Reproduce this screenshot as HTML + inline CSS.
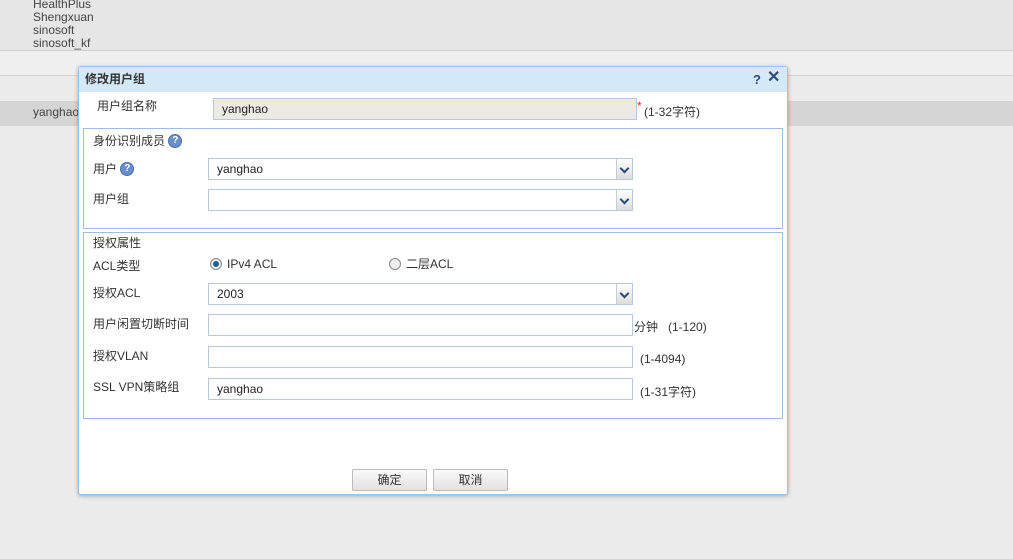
<!DOCTYPE html>
<html><head><meta charset="utf-8"><style>
*{margin:0;padding:0;box-sizing:border-box}
body{width:1013px;height:559px;background:#ebebeb;position:relative;overflow:hidden;font-family:"Liberation Sans","Noto Sans CJK SC",sans-serif;font-size:12px;color:#333}
.a{position:absolute;line-height:15px}
.inp{position:absolute;height:22px;border:1px solid #b8c8de;background:#fff;padding-left:8px;line-height:20px;color:#222}
.sel .ar{position:absolute;right:0;top:0;width:16px;height:20px;border-left:1px solid #c5cad3;background:linear-gradient(#fff,#dcdcdc)}
.sel .ar:after{content:"";position:absolute;left:4px;top:6px;width:5px;height:5px;border-right:2px solid #2d4a7a;border-bottom:2px solid #2d4a7a;transform:rotate(45deg)}
.q{display:inline-block;width:14px;height:14px;border-radius:50%;background:#6a8fc9;border:1px solid #4a6fa9;color:#fff;font-size:10px;font-weight:bold;text-align:center;line-height:12px;vertical-align:top}
.fs{position:absolute;border:1px solid #9ebde0;background:#fff}
.btn{position:absolute;height:22px;border:1px solid #bbb;background:linear-gradient(#fafafa,#e2e2e2);text-align:center;line-height:20px;border-radius:2px}
.rad{display:inline-block;width:12px;height:12px;border-radius:50%;border:1px solid #888;background:#eee;vertical-align:-2px;margin-right:5px;position:relative}
</style></head><body>
<div class="a" style="left:0;top:0;width:1013px;height:50px;background:#e6e6e6"></div>
<div class="a" style="left:33px;top:-2px;line-height:13px;color:#444">HealthPlus<br>Shengxuan<br>sinosoft<br>sinosoft_kf</div>
<div class="a" style="left:0;top:50px;width:1013px;height:1px;background:#d0d0d0"></div>
<div class="a" style="left:0;top:51px;width:1013px;height:24px;background:#efefef"></div>
<div class="a" style="left:0;top:75px;width:1013px;height:1px;background:#d4d4d4"></div>
<div class="a" style="left:0;top:101px;width:1013px;height:25px;background:#d5d5d5"></div>
<div class="a" style="left:33px;top:105px;color:#444">yanghao</div>

<div class="a" style="left:78px;top:66px;width:710px;height:429px;background:#fff;border:1px solid #9cc3e6;border-radius:3px;box-shadow:0 1px 4px rgba(0,0,0,.3);line-height:normal">
 <div class="a" style="left:0;top:0;width:708px;height:25px;background:#d4e9f8;font-weight:bold;color:#333;line-height:25px;padding-left:6px">修改用户组</div>
 <div class="a" style="left:674px;top:5px;font-weight:bold;color:#2d4a7a;font-size:13px">?</div>
 <div class="a" style="left:688px;top:3px;font-weight:bold;color:#2d4a7a;font-size:16px">✕</div>
 <div class="a" style="left:18px;top:32px">用户组名称</div>
 <div class="inp" style="left:134px;top:31px;width:424px;background:#ebebe4">yanghao</div>
 <div class="a" style="left:558px;top:32px;color:#e22">*</div>
 <div class="a" style="left:565px;top:38px">(1-32字符)</div>

 <div class="fs" style="left:4px;top:61px;width:700px;height:101px"></div>
 <div class="a" style="left:14px;top:67px">身份识别成员 <span class="q">?</span></div>
 <div class="a" style="left:14px;top:95px">用户 <span class="q">?</span></div>
 <div class="inp sel" style="left:129px;top:91px;width:425px">yanghao<div class="ar"></div></div>
 <div class="a" style="left:14px;top:125px">用户组</div>
 <div class="inp sel" style="left:129px;top:122px;width:425px"><div class="ar"></div></div>

 <div class="fs" style="left:4px;top:165px;width:700px;height:187px"></div>
 <div class="a" style="left:14px;top:169px">授权属性</div>
 <div class="a" style="left:14px;top:192px">ACL类型</div>
 <div class="a" style="left:131px;top:190px"><span class="rad"><span style="position:absolute;left:2px;top:2px;width:6px;height:6px;border-radius:50%;background:#1d5f9e"></span></span>IPv4 ACL</div>
 <div class="a" style="left:310px;top:190px"><span class="rad"></span>二层ACL</div>
 <div class="a" style="left:14px;top:219px">授权ACL</div>
 <div class="inp sel" style="left:129px;top:216px;width:425px">2003<div class="ar"></div></div>
 <div class="a" style="left:14px;top:250px">用户闲置切断时间</div>
 <div class="inp" style="left:129px;top:247px;width:425px"></div>
 <div class="a" style="left:555px;top:253px">分钟 &nbsp;&nbsp;(1-120)</div>
 <div class="a" style="left:14px;top:282px">授权VLAN</div>
 <div class="inp" style="left:129px;top:279px;width:425px"></div>
 <div class="a" style="left:561px;top:285px">(1-4094)</div>
 <div class="a" style="left:14px;top:313px">SSL VPN策略组</div>
 <div class="inp" style="left:129px;top:311px;width:425px">yanghao</div>
 <div class="a" style="left:561px;top:318px">(1-31字符)</div>

 <div class="btn" style="left:273px;top:402px;width:75px">确定</div>
 <div class="btn" style="left:354px;top:402px;width:75px">取消</div>
</div>
</body></html>
